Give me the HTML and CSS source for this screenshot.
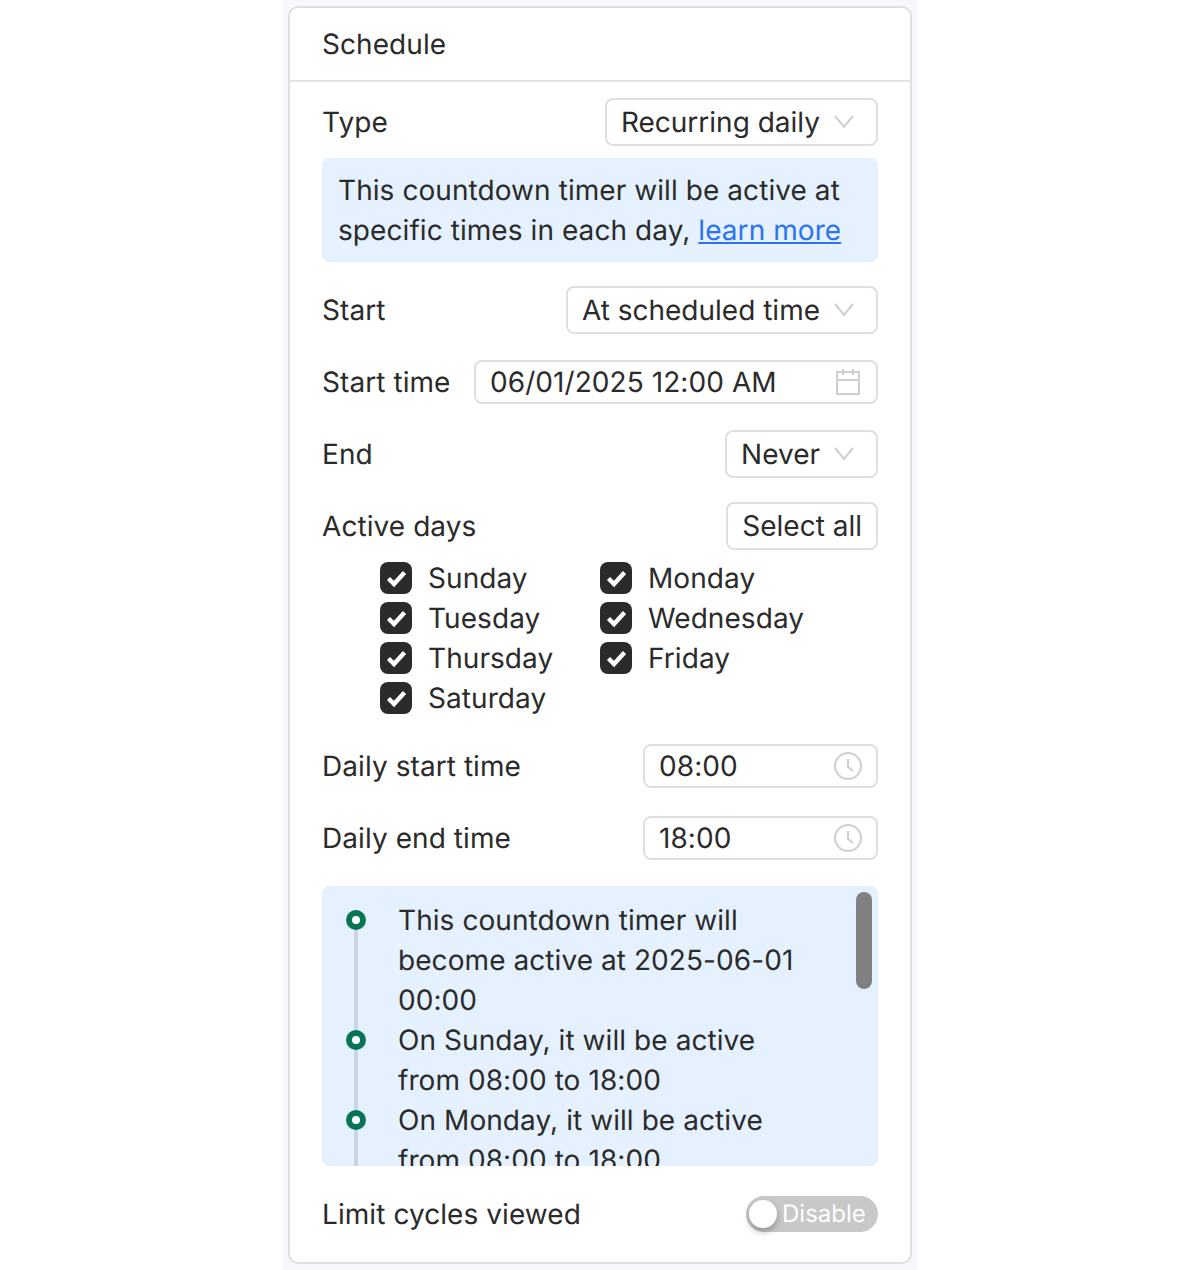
FILE: index.html
```html
<!DOCTYPE html>
<html>
<head>
  <meta charset="utf-8">
  <link rel="stylesheet" href="styles.css">
</head>
<body>
  <div class="page">
    <div class="card">
      <div class="card-header">Schedule</div>
      <div class="card-body">
        <div class="row">
          <span>Type</span>
          <div class="select">Recurring daily
            <svg class="chevron" viewBox="0 0 20 20"><path d="M1 4l9 11 9-11"/></svg>
          </div>
        </div>
        <div class="notice">This countdown timer will be active at specific times in each day, <a href="#">learn more</a></div>

        <div class="row row-gap">
          <span>Start</span>
          <div class="select">At scheduled time
            <svg class="chevron" viewBox="0 0 20 20"><path d="M1 4l9 11 9-11"/></svg>
          </div>
        </div>
        <div class="row row-gap">
          <span>Start time</span>
          <div class="input input-date">06/01/2025 12:00 AM
            <svg class="field-icon" viewBox="0 0 28 28"><path d="M3 4h22v22H3zM3 12h22M9 1v6M19 1v6"/></svg>
          </div>
        </div>
        <div class="row row-gap">
          <span>End</span>
          <div class="select">Never
            <svg class="chevron" viewBox="0 0 20 20"><path d="M1 4l9 11 9-11"/></svg>
          </div>
        </div>
        <div class="row row-gap">
          <span>Active days</span>
          <button class="select-all">Select all</button>
        </div>

        <div class="days">
          <label class="day"><span class="check"><svg viewBox="0 0 32 32"><path d="M8.5 16.5l5.5 5.5 10.5-11.5"/></svg></span>Sunday</label>
          <label class="day"><span class="check"><svg viewBox="0 0 32 32"><path d="M8.5 16.5l5.5 5.5 10.5-11.5"/></svg></span>Monday</label>
          <label class="day"><span class="check"><svg viewBox="0 0 32 32"><path d="M8.5 16.5l5.5 5.5 10.5-11.5"/></svg></span>Tuesday</label>
          <label class="day"><span class="check"><svg viewBox="0 0 32 32"><path d="M8.5 16.5l5.5 5.5 10.5-11.5"/></svg></span>Wednesday</label>
          <label class="day"><span class="check"><svg viewBox="0 0 32 32"><path d="M8.5 16.5l5.5 5.5 10.5-11.5"/></svg></span>Thursday</label>
          <label class="day"><span class="check"><svg viewBox="0 0 32 32"><path d="M8.5 16.5l5.5 5.5 10.5-11.5"/></svg></span>Friday</label>
          <label class="day"><span class="check"><svg viewBox="0 0 32 32"><path d="M8.5 16.5l5.5 5.5 10.5-11.5"/></svg></span>Saturday</label>
        </div>

        <div class="row row-gap">
          <span>Daily start time</span>
          <div class="input input-time">08:00
            <svg class="field-icon" viewBox="0 0 28 28"><circle cx="14" cy="14" r="13"/><path d="M14 7v8l5 4"/></svg>
          </div>
        </div>
        <div class="row row-gap">
          <span>Daily end time</span>
          <div class="input input-time">18:00
            <svg class="field-icon" viewBox="0 0 28 28"><circle cx="14" cy="14" r="13"/><path d="M14 7v8l5 4"/></svg>
          </div>
        </div>

        <div class="timeline-box">
          <div class="scrollbar"></div>
          <div class="timeline">
            <div class="event">This countdown timer will become active at 2025-06-01 00:00</div>
            <div class="event">On Sunday, it will be active from 08:00 to 18:00</div>
            <div class="event">On Monday, it will be active from 08:00 to 18:00</div>
          </div>
        </div>

        <div class="row row-gap">
          <span>Limit cycles viewed</span>
          <div class="toggle"><span class="knob"></span>Disable</div>
        </div>
      </div>
    </div>
  </div>
</body>
</html>
```

FILE: styles.css
```css
*, *::before, *::after {
  box-sizing: border-box;
}
html, body {
  margin: 0;
  height: 100%;
  background: #fff;
}
body {
  font-family: Inter, "Noto Sans", sans-serif;
  font-size: 28px;
  color: #2b2b2b;
  letter-spacing: 0.07px;
  text-rendering: geometricPrecision;
}
.page {
  width: 636px;
  height: 1270px;
  margin: 0 auto;
  padding: 6px;
  background: #f6f8fc;
  overflow: hidden;
}
.card {
  width: 624px;
  height: 1258px;
  background: #fff;
  border: 2px solid #dfdfdf;
  border-radius: 10px;
}
.card-header {
  height: 74px;
  padding: 0 32px;
  line-height: 73px;
  border-bottom: 2px solid #e2e2e2;
}
.card-body {
  padding: 16px 32px 0;
}
.row {
  display: flex;
  justify-content: space-between;
  align-items: center;
  min-height: 48px;
}
.row-gap {
  margin-top: 24px;
}
.select, .select-all {
  display: flex;
  align-items: center;
  height: 48px;
  padding: 0 14px;
  background: #fff;
  border: 2px solid #dfdfdf;
  border-radius: 8px;
  font: inherit;
  color: inherit;
  letter-spacing: 0;
}
.chevron {
  width: 20px;
  height: 20px;
  margin-left: 14px;
  margin-right: 8px;
  fill: none;
  stroke: #cfcfcf;
  stroke-width: 2;
}
.notice {
  margin-top: 12px;
  padding: 12px 16px;
  background: #e5f1fe;
  border-radius: 8px;
  line-height: 40px;
}
.notice a {
  color: #2b74f0;
}
.input {
  display: flex;
  align-items: center;
  justify-content: space-between;
  height: 44px;
  padding: 0 14px;
  border: 2px solid #dfdfdf;
  border-radius: 8px;
}
.input-date {
  width: 404px;
}
.input-time {
  width: 235px;
}
.field-icon {
  width: 28px;
  height: 28px;
  fill: none;
  stroke: #cfcfcf;
  stroke-width: 2;
}
.days {
  display: grid;
  grid-template-columns: 220px 1fr;
  grid-auto-rows: 40px;
  margin-top: 8px;
  padding-left: 58px;
}
.day {
  display: flex;
  align-items: center;
  gap: 16px;
}
.check {
  width: 32px;
  height: 32px;
  background: #2b2b2b;
  border-radius: 8px;
}
.check svg {
  display: block;
  fill: none;
  stroke: #fff;
  stroke-width: 4.4;
}
.timeline-box {
  position: relative;
  height: 280px;
  margin-top: 24px;
  background: #e5f1fe;
  border-radius: 8px;
  overflow: hidden;
}
.scrollbar {
  position: absolute;
  top: 6px;
  right: 6px;
  width: 16px;
  height: 97px;
  background: #808080;
  border-radius: 8px;
}
.timeline {
  padding: 14px 60px 0 76px;
  line-height: 40px;
}
.event {
  position: relative;
}
.event::before {
  content: "";
  position: absolute;
  left: -52px;
  top: 10px;
  width: 20px;
  height: 20px;
  background: #fff;
  border: 6px solid #077454;
  border-radius: 50%;
  z-index: 1;
}
.event::after {
  content: "";
  position: absolute;
  left: -44px;
  top: 14px;
  bottom: -20px;
  width: 4px;
  background: #ccd4e2;
}
.toggle {
  position: relative;
  width: 132px;
  height: 36px;
  padding-left: 36px;
  background: #c8c8c8;
  border-radius: 18px;
  font-size: 24px;
  line-height: 36px;
  letter-spacing: 0;
  color: #fff;
}
.knob {
  position: absolute;
  left: 3px;
  top: 4px;
  width: 28px;
  height: 28px;
  background: #fff;
  border-radius: 50%;
  box-shadow: 0 4px 6px rgba(0, 0, 0, 0.25);
}
```
